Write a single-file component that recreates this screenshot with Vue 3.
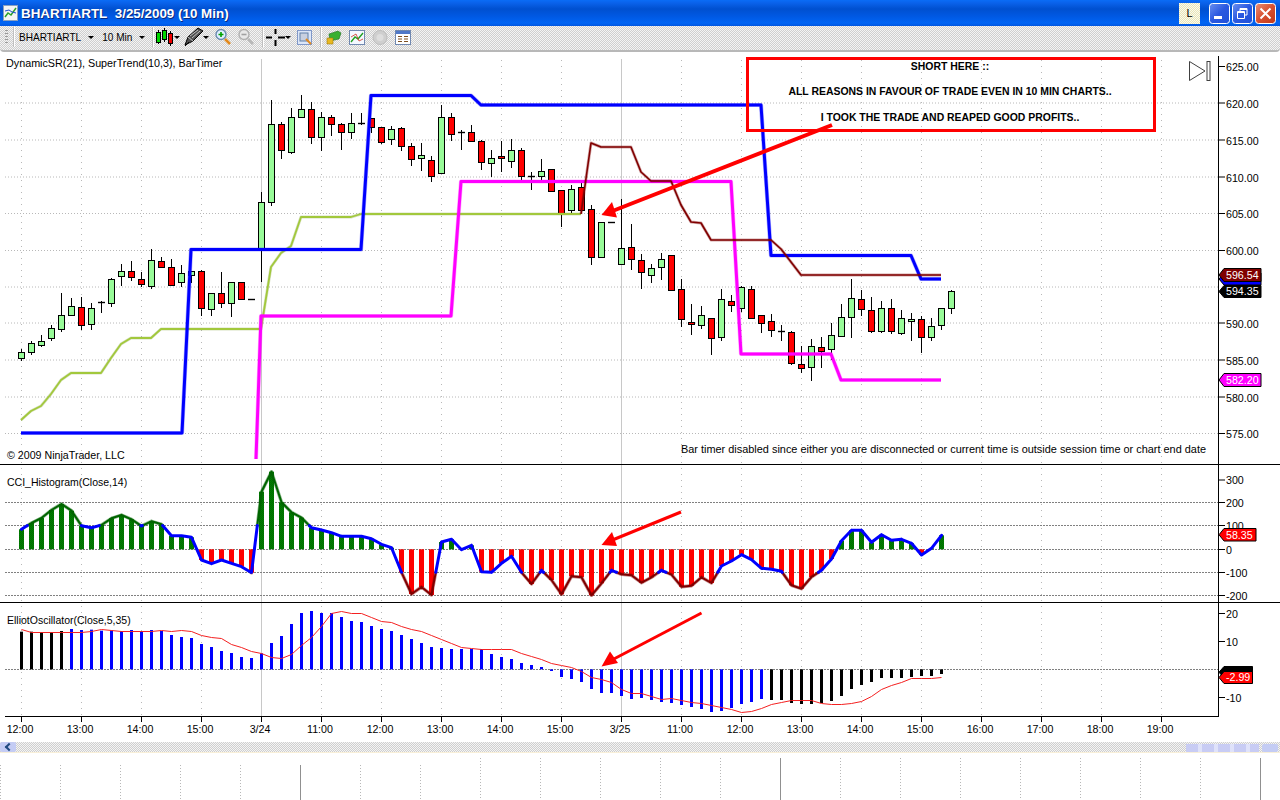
<script setup>
const X = (i) => 21.5 + 10 * i

// wickTop, bodyTop, bodyBottom, low, kind (g up, r down, d doji)
const raw = [
  [349,352,358,361,'g'],[341,343,352,355,'g'],[335,341,345,347,'g'],[325,328,338,341,'g'],[293,315,329,332,'g'],
  [298,306,315,315,'g'],[297,307,325,330,'r'],[303,308,324,330,'g'],[301,302,304,313,'d'],[278,279,303,307,'g'],
  [264,271,276,286,'g'],[261,271,277,281,'r'],[272,279,284,287,'r'],[249,260,286,289,'g'],[257,261,267,267,'r'],
  [259,267,285,285,'r'],[265,273,282,287,'g'],[271,271,275,283,'g'],[270,271,308,316,'r'],[293,293,309,316,'g'],
  [272,293,303,308,'r'],[282,282,303,317,'g'],[282,282,299,299,'r'],[299,299,299,299,'d'],[192,202,249,282,'g'],
  [100,124,202,206,'g'],[122,124,150,159,'r'],[108,117,152,154,'g'],[95,109,117,117,'g'],[102,109,137,144,'r'],
  [112,117,137,151,'g'],[115,117,124,136,'r'],[123,124,132,150,'r'],[113,123,132,139,'g'],[113,123,124,125,'d'],
  [118,118,127,133,'r'],[127,127,142,144,'r'],[126,129,139,145,'g'],[127,128,146,151,'r'],[143,146,159,166,'r'],
  [143,155,158,171,'g'],[156,160,176,182,'r'],[105,117,173,173,'g'],[113,117,134,141,'r'],[130,132,133,150,'d'],
  [125,132,141,141,'r'],[140,141,162,170,'r'],[150,158,163,177,'g'],[141,156,158,172,'r'],[139,150,161,168,'g'],
  [148,150,176,180,'r'],[172,176,177,190,'d'],[159,171,176,183,'g'],[169,169,191,191,'r'],[190,190,213,227,'r'],
  [185,189,210,214,'g'],[183,187,210,210,'r'],[205,209,257,265,'r'],[222,222,257,257,'g'],[222,222,222,222,'d'],
  [199,248,264,264,'g'],[224,247,259,270,'r'],[254,260,272,289,'r'],[264,268,275,283,'g'],[253,259,267,280,'g'],
  [255,255,290,290,'r'],[279,289,319,327,'r'],[304,322,324,335,'r'],[306,315,325,329,'g'],[318,318,338,355,'r'],
  [289,299,337,341,'g'],[295,301,305,312,'r'],[286,287,308,312,'g'],[286,289,318,318,'r'],[315,315,323,333,'r'],
  [314,321,330,337,'r'],[325,331,332,341,'d'],[331,332,363,365,'r'],[346,364,368,373,'r'],[339,346,367,381,'g'],
  [337,347,351,368,'r'],[323,335,349,360,'g'],[304,317,336,337,'g'],[279,298,317,338,'g'],[290,299,309,316,'r'],
  [297,310,331,333,'r'],[301,308,331,333,'g'],[299,308,331,334,'r'],[310,318,333,335,'g'],[313,319,321,341,'g'],
  [316,319,337,353,'r'],[318,326,337,341,'g'],[308,308,325,330,'g'],[290,291,308,314,'g'],
]
const candles = raw.map((c, i) => ({ x: X(i), wt: c[0], bt: c[1], bb: c[2], lo: c[3], kind: c[4] }))

const pts = (list) => list.map((p) => p.join(',')).join(' ')

const blueLine = pts([[21,433],[182,433],[191,249.5],[361,249.5],[371,95.5],[471,95.5],[481,105],[761,105],[771,255.5],[911,255.5],[921,279],[941,279]])
const magentaLine = pts([[256,459],[261,316],[451,316],[461,181.5],[731,181.5],[741,354],[831,354],[841,380],[941,380]])
const oliveLine = pts([[21,420],[31,411],[41,406],[51,394],[61,380],[71,373],[101,373],[111,358],[121,344],[131,338],[151,338],[161,329],[261,329],[271,267],[281,253],[291,246],[301,217],[351,217],[361,214],[581,214]])
const maroonLine = pts([[581,214],[591,143],[601,147],[631,147],[641,172],[651,181],[671,181],[681,205],[691,222],[701,223],[711,240],[771,240],[781,249],[801,275],[941,275]])

// CCI
const cciY = [529.3,523,518,510,504,510.7,525.7,527.7,525,518.3,515,519.3,526,521.3,524.3,535.7,535.7,537.3,560,563.7,560,563.3,566.7,572.7,491.7,471.7,502.3,512.3,517.7,527.7,530,532.7,536.3,536.3,536.3,538.7,544.3,547.7,572.3,594,587,595,542,539.3,549.7,545.3,571.7,572.3,563.3,556.3,572.3,584,570.3,580,594.3,576.3,577.3,595.3,583.3,570.3,574.3,575.3,582.7,577.3,570.3,574.7,586.7,585.7,577.3,583,566,561,554.7,559.7,568.3,569.3,571.3,585.3,588.7,577,570.3,559,540.7,530.3,530.3,542.3,534.7,540.3,539.3,543.3,555,548.3,535.3]
const Z0 = 549.3
const HI = 525.6
const LO = 572.3
const cciBars = cciY.map((y, i) => ({
  x: X(i) - 2.5,
  y: Math.min(y, Z0),
  h: Math.abs(y - Z0),
  up: y < Z0,
}))
const band = (y) => (y < HI ? 'hi' : y > LO ? 'lo' : 'mid')
const cciSegs = { hi: [], mid: [], lo: [] }
cciY.forEach((y, i) => {
  if (i === cciY.length - 1) return
  const y2 = cciY[i + 1]
  const x1 = X(i)
  const stops = [0]
  for (const t of [HI, LO]) {
    if ((y - t) * (y2 - t) < 0) stops.push((t - y) / (y2 - y))
  }
  stops.push(1)
  stops.sort((a, b) => a - b)
  for (let k = 0; k < stops.length - 1; k++) {
    const a = stops[k]
    const b = stops[k + 1]
    const ya = y + (y2 - y) * a
    const yb = y + (y2 - y) * b
    cciSegs[band((ya + yb) / 2)].push(`M${x1 + 10 * a} ${ya}L${x1 + 10 * b} ${yb}`)
  }
})
const cciHi = cciSegs.hi.join('')
const cciMid = cciSegs.mid.join('')
const cciLo = cciSegs.lo.join('')

// Elliot
const eoZ = [95,95,97,97,93,87,90,89,92,91,93,90,93,90,93,105,111,114,132,141,153,159,171,174,160,129,108,72,39,33,39,39,51,63,66,78,87,93,105,117,129,141,144,147,147,147,147,162,171,177,189,195,201,213,231,237,246,267,279,279,288,297,294,300,306,309,315,321,327,336,333,324,312,306,297,300,300,309,312,312,309,303,288,267,255,246,234,234,234,231,228,228,222]
const E0 = 208
const eoBars = eoZ.map((z, i) => ({
  x: 20 + 10 * i,
  y: 600 + Math.min(z, E0) / 3,
  h: Math.abs(z - E0) / 3,
  black: i < 5 || i > 74,
}))
const eoSig = [88,97,97,97,97,97,97,93,89,92,93,93,93,93,92,95,92,95,105,111,114,132,142,154,160,172,176,162,135,113,80,40,34,40,40,52,64,67,79,88,94,106,118,130,142,145,147,147,147,147,160,170,177,189,195,202,213,231,237,246,267,279,281,288,297,295,300,306,310,316,322,328,338,334,324,313,307,300,301,301,310,313,313,310,303,288,267,255,246,234,234,234,231]
const eoLine = eoSig.map((z, i) => `${X(i)},${Math.floor(600 + z / 3) + 0.5}`).join(' ')

// Grid and axes
const priceTicks = [
  ['625.00',66.5,false],['620.00',103,true],['615.00',140,true],['610.00',177,true],['605.00',213.5,true],['600.00',250.5,true],
  ['590.00',323,true],['585.00',360,true],['580.00',397,true],['575.00',433.5,true],
]
const priceGrid = [103,140,177,213.5,250.5,287,323,360,397,433.5]
const cciTicks = [['300',480],['200',502.5],['100',525.5],['0',549.5],['-100',572.5],['-200',595.5]]
const cciGrid = [502.5,525.5,549.5,572.5,595.5]
const eoTicks = [['20',613.5],['10',641.5],['-10',697.5]]

const dates = ['12:00','13:00','14:00','15:00','3/24','11:00','12:00','13:00','14:00','15:00','3/25','11:00','12:00','13:00','14:00','15:00','16:00','17:00','18:00','19:00']
const timeTicks = dates.map((label, i) => ({ label, x: 21.5 + 60 * i }))
const sessionLines = timeTicks.filter((t) => t.label === '3/24' || t.label === '3/25')
const dotLines = timeTicks.filter((t) => t.label !== '3/24' && t.label !== '3/25')

const flagPts = (x2, y1, y2) => `1219,${(y1 + y2) / 2} 1224,${y1} ${x2},${y1} ${x2},${y2} 1224,${y2}`
const flags = [
  { fill: '#0000ff', pts: flagPts(1261, 273, 285), text: '', ty: 0 },
  { fill: '#800000', pts: flagPts(1261, 268.5, 281.5), text: '596.54', ty: 279 },
  { fill: '#000000', pts: flagPts(1261, 285.5, 297.5), text: '594.35', ty: 295 },
  { fill: '#ff00ff', pts: flagPts(1261, 373.5, 386.5), text: '582.20', ty: 384 },
  { fill: '#ff0000', pts: flagPts(1256, 528.5, 541), text: '58.35', ty: 539 },
  { fill: '#000000', pts: flagPts(1252.5, 666.5, 678), text: '', ty: 0 },
  { fill: '#ff0000', pts: flagPts(1252.5, 671.5, 683.5), text: '-2.99', ty: 681 },
]

const stripLines = Array.from({ length: 22 }, (_, i) => ({
  x: 60 * i + 0.5,
  y1: i < 8 ? 12 : 5,
  solid: i === 5 || i === 13 || i === 21,
}))
</script>

<template>
  <div class="window">
    <header class="titlebar">
      <svg class="app-icon" width="15" height="16" viewBox="0 0 15 16">
        <rect x="0.5" y="0.5" width="14" height="15" fill="#f4f4f4" stroke="#8aa0c0" />
        <path d="M2 12L5 8L8 10L13 3" fill="none" stroke="#2aa02a" stroke-width="1.5" />
        <path d="M2 6L6 5L9 7L13 8" fill="none" stroke="#2050d0" stroke-width="1" />
      </svg>
      <span class="title-text">BHARTIARTL&nbsp; 3/25/2009 (10 Min)</span>
      <span class="spacer"></span>
      <span class="link-btn">L</span>
      <svg class="win-btn" width="21" height="21" viewBox="0 0 21 21">
        <defs>
          <linearGradient id="bluebtn" x1="0" y1="0" x2="1" y2="1"><stop offset="0" stop-color="#6a90f0" /><stop offset="0.5" stop-color="#2a58e0" /><stop offset="1" stop-color="#2050d8" /></linearGradient>
          <linearGradient id="redbtn" x1="0" y1="0" x2="1" y2="1"><stop offset="0" stop-color="#e89078" /><stop offset="0.5" stop-color="#d85030" /><stop offset="1" stop-color="#c03818" /></linearGradient>
        </defs>
        <rect x="0.5" y="0.5" width="20" height="20" rx="3" fill="url(#bluebtn)" stroke="#fff" />
        <rect x="5" y="13" width="8" height="3" fill="#fff" />
      </svg>
      <svg class="win-btn" width="21" height="21" viewBox="0 0 21 21">
        <rect x="0.5" y="0.5" width="20" height="20" rx="3" fill="url(#bluebtn)" stroke="#fff" />
        <path d="M8 5.5H15V12H13M8 5.5V8M5.5 8.5H12.5V15.5H5.5Z M5.5 9.5H12.5 M8 6.5H15" fill="none" stroke="#fff" stroke-width="1" />
      </svg>
      <svg class="win-btn" width="21" height="21" viewBox="0 0 21 21">
        <rect x="0.5" y="0.5" width="20" height="20" rx="3" fill="url(#redbtn)" stroke="#fff" />
        <path d="M5.5 5.5L15.5 15.5M15.5 5.5L5.5 15.5" stroke="#fff" stroke-width="2" />
      </svg>
    </header>

    <div class="toolbar">
      <span class="grip"></span>
      <span class="sep sep-first"></span>
      <span class="tb-label tb-sym">BHARTIARTL</span>
      <span class="caret caret-sym"></span>
      <span class="tb-label tb-int">10 Min</span>
      <span class="caret caret-int"></span>
      <span class="sep sep-a"></span>
      <svg class="ic-candle" width="18" height="20" viewBox="0 0 18 20">
        <path d="M3.5 3V17M9.5 1V15M15.5 4V19" stroke="#000" />
        <rect x="1.5" y="5.5" width="4" height="10" fill="#00d800" stroke="#000" />
        <rect x="7.5" y="3.5" width="4" height="9" fill="#00d800" stroke="#000" />
        <rect x="13.5" y="6.5" width="4" height="10" fill="#f00000" stroke="#000" />
      </svg>
      <span class="caret caret-b"></span>
      <svg class="ic-pen" width="20" height="20" viewBox="0 0 20 20">
        <path d="M1 18L4 10L14 1L19 4L9 14Z" fill="#505050" stroke="#000" />
        <path d="M4 10L9 14M6 9L14 3M8 11L16 4" stroke="#e0e0e0" fill="none" stroke-width="0.8" />
        <path d="M1 19L5 15" stroke="#000" />
      </svg>
      <span class="caret caret-c"></span>
      <svg class="ic-zoom" width="16" height="18" viewBox="0 0 16 18">
        <circle cx="6" cy="6.5" r="5" fill="#e0f0ff" stroke="#6a8ab0" stroke-width="1.4" />
        <path d="M3.5 6.5H8.5M6 4V9" stroke="#00a000" stroke-width="1.6" />
        <path d="M10 11L15 16" stroke="#e08a20" stroke-width="2.6" />
      </svg>
      <svg class="ic-zoomout" width="16" height="18" viewBox="0 0 16 18">
        <circle cx="6" cy="6.5" r="5" fill="#e8e8e8" stroke="#b0b0b0" stroke-width="1.4" />
        <path d="M3.5 6.5H8.5" stroke="#a0a0a0" stroke-width="1.6" />
        <path d="M10 11L15 16" stroke="#b8b8b8" stroke-width="2.6" />
      </svg>
      <span class="sep sep-d"></span>
      <svg class="ic-cross" width="19" height="17" viewBox="0 0 19 17">
        <path d="M0 8.5H6M12 8.5H19M9.5 0V5M9.5 11V17" stroke="#000" stroke-width="2" />
      </svg>
      <span class="caret caret-e"></span>
      <svg class="ic-prop" width="15" height="15" viewBox="0 0 15 15">
        <rect x="0.5" y="0.5" width="14" height="14" fill="#dce6f8" stroke="#8098c8" />
        <rect x="3" y="3" width="8" height="8" fill="#c8d0e0" stroke="#6080a8" />
        <path d="M9 9L14 14" stroke="#e08a20" stroke-width="2" />
      </svg>
      <span class="sep sep-f"></span>
      <svg class="ic-a" width="16" height="15" viewBox="0 0 16 15">
        <path d="M3 4L12 1L15 3L13 9L4 11Z" fill="#38b030" stroke="#207020" stroke-width="0.6" />
        <path d="M1 8H7V14H1Z" fill="#e8b820" stroke="#a07810" stroke-width="0.6" />
      </svg>
      <svg class="ic-b" width="16" height="15" viewBox="0 0 16 15">
        <rect x="0.5" y="0.5" width="15" height="14" fill="#f4f8ff" stroke="#7088b0" />
        <path d="M2 12L6 7L9 9L14 3" fill="none" stroke="#20a020" stroke-width="1.4" />
        <path d="M2 7L7 4L10 11L14 9" fill="none" stroke="#d03020" stroke-width="0.8" />
      </svg>
      <svg class="ic-c" width="16" height="15" viewBox="0 0 16 15">
        <circle cx="8" cy="7.5" r="7" fill="#cfcfcf" stroke="#bdbdbd" />
        <circle cx="8" cy="7.5" r="3.5" fill="#dedede" />
      </svg>
      <svg class="ic-d" width="16" height="15" viewBox="0 0 16 15">
        <rect x="0.5" y="0.5" width="15" height="14" fill="#fff" stroke="#7088b0" />
        <rect x="1" y="1" width="14" height="3" fill="#5078c8" />
        <path d="M3 6.5H7M9 6.5H13M3 9H7M9 9H13M3 11.5H7M9 11.5H13" stroke="#805020" />
      </svg>
    </div>

    <svg class="chart" width="1280" height="690" viewBox="0 52 1280 690">
      <defs>
        <pattern id="ditherGreen" width="2" height="2" patternUnits="userSpaceOnUse">
          <rect width="2" height="2" fill="#008000" />
          <rect width="1" height="1" fill="#006c00" />
          <rect x="1" y="1" width="1" height="1" fill="#006c00" />
        </pattern>
      </defs>

      <!-- vertical grid -->
      <g class="v-grid">
        <line v-for="t in dotLines" :key="t.x" :x1="t.x" :x2="t.x" y1="60" y2="716" />
      </g>
      <line v-for="t in sessionLines" :key="t.x" class="session" :x1="t.x" :x2="t.x" y1="59" y2="716" />

      <!-- horizontal grid -->
      <line v-for="y in priceGrid" :key="y" class="h-grid" x1="5" x2="1218" :y1="y" :y2="y" />
      <line v-for="y in cciGrid" :key="y" class="h-line" x1="5" x2="1218" :y1="y" :y2="y" />
      <line class="h-line" x1="5" x2="1218" y1="669.5" y2="669.5" />

      <!-- price candles -->
      <g v-for="c in candles" :key="c.x">
        <line class="wick" :x1="c.x" :x2="c.x" :y1="c.wt" :y2="c.lo" />
        <line v-if="c.kind === 'd'" class="doji" :x1="c.x - 3.5" :x2="c.x + 3.5" :y1="c.bt + 0.5" :y2="c.bt + 0.5" />
        <rect v-else :class="c.kind === 'g' ? 'up' : 'down'" :x="c.x - 3" :y="c.bt + 0.5" width="6" :height="c.bb - c.bt" />
      </g>

      <polyline class="ind olive-halo" :points="oliveLine" />
      <polyline class="ind olive" :points="oliveLine" />
      <polyline class="ind blue-halo" :points="blueLine" />
      <polyline class="ind blue" :points="blueLine" />
      <polyline class="ind magenta-halo" :points="magentaLine" />
      <polyline class="ind magenta" :points="magentaLine" />
      <polyline class="ind maroon-halo" :points="maroonLine" />
      <polyline class="ind maroon" :points="maroonLine" />

      <!-- CCI -->
      <rect v-for="b in cciBars" :key="'c' + b.x" :x="b.x" :y="b.y" width="5" :height="b.h" :fill="b.up ? 'url(#ditherGreen)' : '#ff0000'" />
      <path class="cci cci-hi-h" :d="cciHi" />
      <path class="cci cci-hi" :d="cciHi" />
      <path class="cci cci-lo-h" :d="cciLo" />
      <path class="cci cci-lo" :d="cciLo" />
      <path class="cci cci-mid" :d="cciMid" />

      <!-- Elliot -->
      <rect v-for="b in eoBars" :key="'e' + b.x" :x="b.x" :y="b.y" width="3" :height="b.h" :fill="b.black ? '#000' : '#0000ff'" />
      <polyline class="ind sig" :points="eoLine" />

      <!-- panel frames -->
      <line class="frame" x1="0" x2="1280" y1="464.5" y2="464.5" />
      <line class="frame" x1="0" x2="1280" y1="602.5" y2="602.5" />
      <line class="frame" x1="5" x2="1218.5" y1="716.5" y2="716.5" />
      <line class="frame" x1="1218.5" x2="1218.5" y1="56" y2="717" />

      <!-- axes -->
      <g v-for="t in priceTicks" :key="t[0]">
        <line class="frame" x1="1218" x2="1225" :y1="t[1]" :y2="t[1]" />
        <text class="lbl" x="1226" :y="t[1] + 4.5">{{ t[0] }}</text>
      </g>
      <g v-for="t in cciTicks" :key="t[0]">
        <line class="frame" x1="1218" x2="1225" :y1="t[1]" :y2="t[1]" />
        <text class="lbl" x="1226" :y="t[1] + 4">{{ t[0] }}</text>
      </g>
      <g v-for="t in eoTicks" :key="t[0]">
        <line class="frame" x1="1218" x2="1225" :y1="t[1]" :y2="t[1]" />
        <text class="lbl" x="1226" :y="t[1] + 4">{{ t[0] }}</text>
      </g>
      <g v-for="t in timeTicks" :key="'t' + t.x">
        <line class="frame" :x1="t.x" :x2="t.x" y1="716" y2="722" />
        <text class="lbl" :x="t.x - 1.5" y="733" text-anchor="middle">{{ t.label }}</text>
      </g>

      <!-- labels -->
      <text class="lbl lbl-legend" x="6" y="67">DynamicSR(21), SuperTrend(10,3), BarTimer</text>
      <text class="lbl lbl-sub" x="7" y="486">CCI_Histogram(Close,14)</text>
      <text class="lbl lbl-sub" x="7" y="624">ElliotOscillator(Close,5,35)</text>
      <text class="lbl" x="7" y="459">© 2009 NinjaTrader, LLC</text>
      <text class="lbl lbl-timer" x="1206" y="453" text-anchor="end">Bar timer disabled since either you are disconnected or current time is outside session time or chart end date</text>

      <!-- price flags -->
      <g v-for="f in flags" :key="f.pts">
        <polygon :points="f.pts" :fill="f.fill" stroke="#000" />
        <text v-if="f.text" class="flag-text" x="1226" :y="f.ty">{{ f.text }}</text>
      </g>

      <!-- annotation -->
      <rect class="note" x="747.5" y="58.5" width="407" height="72" />
      <text class="note-text" x="950" y="70">SHORT HERE ::</text>
      <text class="note-text" x="950" y="95">ALL REASONS IN FAVOUR OF TRADE EVEN IN 10 MIN CHARTS..</text>
      <text class="note-text" x="950" y="121">I TOOK THE TRADE AND REAPED GOOD PROFITS..</text>

      <!-- red arrows -->
      <line class="arrow arrow-big" x1="832" y1="125" x2="610" y2="212" />
      <polygon class="head" points="601.5,215 612,202 617,217.5" />
      <line class="arrow" x1="681" y1="512" x2="610" y2="541" />
      <polygon class="head" points="601.5,545 612,532 617,546" />
      <line class="arrow" x1="701.5" y1="613" x2="610" y2="661" />
      <polygon class="head" points="601.5,666.5 610,651.5 618,663" />

      <!-- skip-to-end button -->
      <path class="skip" d="M1189.5 61.5L1205 71L1189.5 80.5Z" />
      <rect class="skip" x="1207" y="61.5" width="3" height="19" />
    </svg>

    <div class="hscroll">
      <span class="scroll-btn"><span class="chev"></span></span>
      <span class="track"></span>
      <span class="thumb"></span>
      <span class="scroll-btn scroll-end"></span>
    </div>

    <svg class="strip" width="1280" height="47" viewBox="0 0 1280 47">
      <line v-for="l in stripLines" :key="l.x" :class="l.solid ? 'strip-solid' : 'strip-dot'" :x1="l.x" :x2="l.x" :y1="l.y1" y2="47" />
    </svg>
  </div>
</template>

<style>
html, body { margin: 0; background: #fff; }
</style>

<style scoped>
.window {
  width: 1280px;
  height: 800px;
  overflow: hidden;
  display: flex;
  flex-direction: column;
  background: #fff;
  font-family: "Liberation Sans", Arial, sans-serif;
}
.titlebar {
  height: 26px;
  flex: none;
  display: flex;
  align-items: center;
  padding: 0 2px 0 3px;
  box-sizing: border-box;
  background: linear-gradient(#0a6cf6 0, #0a62ea 3px, #0050d0 9px, #0058e2 16px, #0064f4 23px, #0056e0 26px);
}
.app-icon { margin-top: -1px; }
.title-text {
  margin-left: 3px;
  white-space: pre;
  color: #fff;
  font-weight: 700;
  font-size: 13.4px;
  text-shadow: 1px 1px 0 #0a2a80;
}
.spacer { flex: 1; }
.link-btn {
  width: 21px;
  height: 21px;
  display: flex;
  align-items: center;
  justify-content: center;
  font-size: 11px;
  color: #000;
  background: repeating-conic-gradient(#e8e4b8 0 25%, #fbfbee 0 50%) 0 0 / 2px 2px;
  margin-right: 9px;
}
.win-btn { margin-right: 2px; }
.toolbar {
  height: 26px;
  flex: none;
  display: flex;
  align-items: center;
  box-sizing: border-box;
  padding-left: 5px;
  padding-bottom: 2px;
  background: repeating-conic-gradient(#cfcfcf 0 25%, #f4f4f4 0 50%) 0 0 / 2px 2px;
  border-bottom: 2px solid #b8b8b8;
  border-radius: 0 0 4px 4px;
}
.grip {
  width: 3px;
  height: 14px;
  background: repeating-linear-gradient(#9a9a9a 0 1px, transparent 1px 3px);
}
.sep { width: 1px; height: 20px; background: #c0c0c0; border-right: 1px solid #fff; }
.sep-first { margin-left: 5px; }
.tb-label { font-size: 10.05px; color: #000; white-space: nowrap; }
.tb-sym { margin-left: 4px; }
.caret { width: 0; height: 0; border-left: 3px solid transparent; border-right: 3px solid transparent; border-top: 3px solid #000; }
.caret-sym { margin-left: 7px; }
.tb-int { margin-left: 8px; }
.caret-int { margin-left: 7px; }
.sep-a { margin-left: 7px; }
.ic-candle { margin-left: 1px; }
.caret-b { margin-left: 1px; }
.ic-pen { margin-left: 4px; }
.caret-c { margin-left: -1px; }
.ic-zoom { margin-left: 6px; }
.ic-zoomout { margin-left: 7px; }
.sep-d { margin-left: 8px; }
.ic-cross { margin-left: 2px; }
.caret-e { margin-left: 0; }
.ic-prop { margin-left: 6px; }
.sep-f { margin-left: 8px; }
.ic-a { margin-left: 4px; }
.ic-b { margin-left: 7px; }
.ic-c { margin-left: 7px; }
.ic-d { margin-left: 7px; }

.chart { display: block; flex: none; }
.v-grid line { stroke: #b8b8b8; stroke-width: 1; stroke-dasharray: 1 5; }
.session { stroke: #c8c8c8; stroke-width: 1; }
.h-grid { stroke: #b8b8b8; stroke-width: 1; stroke-dasharray: 1 2; }
.h-line { stroke: #808080; stroke-width: 1; stroke-dasharray: 2 1; }
.wick { stroke: #000; stroke-width: 1; }
.doji { stroke: #000; stroke-width: 1.4; }
.up { fill: #98fb98; stroke: #000; stroke-width: 1; }
.down { fill: #ff0000; stroke: #000; stroke-width: 1; }
.ind { fill: none; stroke-linejoin: round; }
.olive { stroke: #a2c83c; stroke-width: 1.8; }
.olive-halo { stroke: #7a9a30; stroke-width: 3; opacity: 0.3; }
.blue { stroke: #0000ff; stroke-width: 3; }
.blue-halo { stroke: #0000ff; stroke-width: 4.2; opacity: 0.3; }
.magenta { stroke: #ff00ff; stroke-width: 3; }
.magenta-halo { stroke: #ff00ff; stroke-width: 4.2; opacity: 0.3; }
.maroon { stroke: #800000; stroke-width: 1.6; }
.maroon-halo { stroke: #800000; stroke-width: 3; opacity: 0.35; }
.cci { fill: none; stroke-linecap: round; }
.cci-hi { stroke: #006400; stroke-width: 2; }
.cci-hi-h { stroke: #006400; stroke-width: 3.4; opacity: 0.45; }
.cci-lo { stroke: #800000; stroke-width: 2; }
.cci-lo-h { stroke: #800000; stroke-width: 3.4; opacity: 0.45; }
.cci-mid { stroke: #0000ff; stroke-width: 3; }
.sig { stroke: #f42020; stroke-width: 1; }
.frame { stroke: #000; stroke-width: 1; }
.lbl { font-family: "Liberation Sans", Arial, sans-serif; font-size: 10.67px; fill: #000; }
.lbl-legend { font-size: 10.77px; }
.lbl-sub { font-size: 10.5px; }
.lbl-timer { font-size: 10.92px; }
.flag-text { font-family: "Liberation Sans", Arial, sans-serif; font-size: 10.67px; fill: #fff; }
.note { fill: none; stroke: #ff0000; stroke-width: 3; }
.note-text { font-family: "Liberation Sans", Arial, sans-serif; font-size: 10.45px; font-weight: 700; fill: #000; text-anchor: middle; }
.arrow { stroke: #ff0000; stroke-width: 3; }
.arrow-big { stroke-width: 4; }
.head { fill: #ff0000; }
.skip { fill: none; stroke: #404040; stroke-width: 1; }

.hscroll {
  height: 11px;
  flex: none;
  display: flex;
  box-sizing: border-box;
  border-bottom: 1px solid #f8efd8;
  background: repeating-conic-gradient(#cfcfcf 0 25%, #f4f4f4 0 50%) 0 0 / 2px 2px;
}
.scroll-btn {
  width: 16px;
  flex: none;
  display: flex;
  align-items: center;
  justify-content: center;
  background: #c4ccf4;
  border-radius: 2px;
}
.scroll-end { margin: 2px 2px 0 3px; }
.chev {
  width: 4px;
  height: 4px;
  border-left: 2px solid #204a80;
  border-bottom: 2px solid #204a80;
  transform: rotate(45deg);
  margin-left: 2px;
}
.track { flex: 1; }
.thumb {
  width: 73px;
  flex: none;
  margin-top: 2px;
  background: repeating-linear-gradient(90deg, #c8ccf4 0 12px, #dfe2fa 12px 16px);
}
.strip { display: block; flex: none; }
.strip-dot { stroke: #b8b8b8; stroke-width: 1; stroke-dasharray: 1 2; }
.strip-solid { stroke: #909090; stroke-width: 1; }
</style>
